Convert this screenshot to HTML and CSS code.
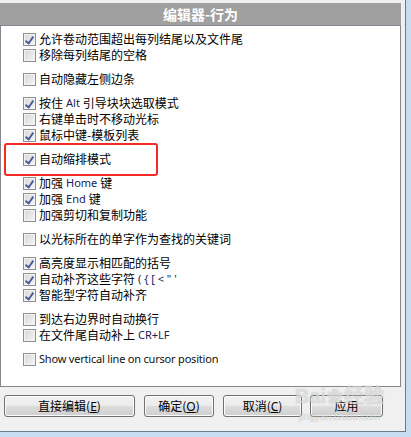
FILE: index.html
```html
<!DOCTYPE html>
<html lang="zh-CN">
<head>
  <meta charset="UTF-8">
  <title>编辑器-行为</title>
  <link rel="stylesheet" href="styles.css">
</head>
<body>
  <div class="dialog">
    <div class="title">编辑器-行为</div>

    <div class="panel">
      <div class="group">
        <label class="row"><span class="box on"></span>允许卷动范围超出每列结尾以及文件尾</label>
        <label class="row"><span class="box"></span>移除每列结尾的空格</label>
      </div>
      <div class="group">
        <label class="row"><span class="box"></span>自动隐藏左侧边条</label>
      </div>
      <div class="group">
        <label class="row"><span class="box on"></span>按住 <span class="en">Alt</span> 引导块块选取模式</label>
        <label class="row"><span class="box"></span>右键单击时不移动光标</label>
        <label class="row"><span class="box on"></span>鼠标中键-模板列表</label>
      </div>
      <div class="group">
        <label class="row"><span class="box on"></span>自动缩排模式</label>
      </div>
      <div class="group">
        <label class="row"><span class="box on"></span>加强 <span class="en">Home</span> 键</label>
        <label class="row"><span class="box on"></span>加强 <span class="en">End</span> 键</label>
        <label class="row"><span class="box"></span>加强剪切和复制功能</label>
      </div>
      <div class="group">
        <label class="row"><span class="box"></span>以光标所在的单字作为查找的关键词</label>
      </div>
      <div class="group">
        <label class="row"><span class="box on"></span>高亮度显示相匹配的括号</label>
        <label class="row"><span class="box on"></span>自动补齐这些字符 <span class="en">( { [ &lt; " '</span></label>
        <label class="row"><span class="box on"></span>智能型字符自动补齐</label>
      </div>
      <div class="group">
        <label class="row"><span class="box"></span>到达右边界时自动换行</label>
        <label class="row"><span class="box"></span>在文件尾自动补上 <span class="en">CR+LF</span></label>
      </div>
      <div class="group">
        <label class="row"><span class="box"></span><span class="latin">Show vertical line on cursor position</span></label>
      </div>

      <div class="highlight"></div>
    </div>

    <div class="buttons">
      <button class="btn btn-edit">直接编辑(<u>E</u>)</button>
      <button class="btn btn-ok">确定(<u>O</u>)</button>
      <button class="btn btn-cancel">取消(<u>C</u>)</button>
      <button class="btn btn-apply">应用</button>
    </div>

    <div class="watermark">
      <span class="wm-logo">Bai<span class="wm-paw">&#10047;</span>经验</span>
      <span class="wm-url">jingyan.baidu.com</span>
    </div>
  </div>
</body>
</html>
```

FILE: styles.css
```css
/* Reset */
* {
    margin: 0;
    padding: 0;
    box-sizing: border-box;
}

body {
    width: 411px;
    height: 437px;
    background: #c8dcf1;
    font-family: "Noto Sans CJK SC", "Noto Sans", sans-serif;
    font-size: 12px;
    color: #000;
    overflow: hidden;
}

/* Dialog client area */
.dialog {
    position: relative;
    width: 406px;
    height: 432px;
    background: #f0f0f0;
    border-right: 1px solid #6e7a88;
    border-bottom: 1px solid #6e7a88;
    padding-top: 3px;
}

.title {
    width: 401px;
    height: 22px;
    background: #a0a0a0;
    color: #fff;
    font-weight: bold;
    font-size: 14px;
    line-height: 22px;
    text-align: center;
}

/* White list panel */
.panel {
    position: relative;
    width: 401px;
    height: 362px;
    background: #fff;
    border: 1px solid #828790;
    padding: 5px 0 0 22px;
    display: flex;
    flex-direction: column;
    gap: 8px;
}

.group {
    display: flex;
    flex-direction: column;
}

.row {
    display: flex;
    align-items: center;
    height: 16px;
    line-height: 16px;
    white-space: nowrap;
}

.en {
    font-family: "Noto Sans", sans-serif;
    font-size: 11px;
    color: #1a2258;
    margin: 0 3px;
}

.latin {
    font-family: "Noto Sans", sans-serif;
    font-size: 11px;
    letter-spacing: -0.2px;
    color: #111;
}

/* Win7 style checkbox */
.box {
    width: 13px;
    height: 13px;
    margin-right: 3px;
    border: 1px solid #8e8f8f;
    background: linear-gradient(135deg, #d6d6d6, #f6f6f6);
    box-shadow: inset 0 0 0 1px #f4f4f4;
    position: relative;
    flex: none;
}

.box.on::after {
    content: "";
    position: absolute;
    left: 3px;
    top: 1px;
    width: 3px;
    height: 7px;
    border-right: 2px solid #4a5f9e;
    border-bottom: 2px solid #4a5f9e;
    transform: rotate(35deg);
}

/* Red annotation box */
.highlight {
    position: absolute;
    left: 3px;
    top: 117px;
    width: 154px;
    height: 33px;
    border: 2px solid #f42a27;
    border-radius: 3px;
}

/* Bottom buttons */
.buttons {
    display: flex;
    gap: 9px;
    padding-left: 4px;
    margin-top: 8px;
}

.btn {
    height: 22px;
    border: 1px solid #707070;
    border-radius: 3px;
    background: linear-gradient(#f2f2f2 0%, #ebebeb 50%, #dddddd 51%, #cfcfcf 100%);
    box-shadow: inset 0 0 0 1px #fcfcfc;
    font-family: "Noto Sans CJK SC", sans-serif;
    font-size: 12px;
    line-height: 18px;
    color: #000;
}

.btn u {
    text-decoration: underline;
    font-family: "Noto Sans", sans-serif;
}

.btn-edit { width: 131px; }
.btn-ok { width: 70px; }
.btn-cancel { width: 79px; }
.btn-apply { width: 73px; margin-left: -1px; }

/* Faint site watermark */
.watermark {
    position: absolute;
    left: 295px;
    top: 384px;
    display: flex;
    flex-direction: column;
    align-items: center;
    color: rgba(255, 255, 255, 0.55);
    text-shadow: 0 0 1px rgba(120, 120, 120, 0.5);
    pointer-events: none;
}

.wm-logo {
    font-family: "Liberation Sans", sans-serif;
    font-size: 20px;
    font-weight: bold;
    line-height: 24px;
}

.wm-paw {
    font-size: 16px;
    margin: 0 1px;
}

.wm-url {
    font-family: "Liberation Sans", sans-serif;
    font-size: 10px;
    line-height: 14px;
}
```
